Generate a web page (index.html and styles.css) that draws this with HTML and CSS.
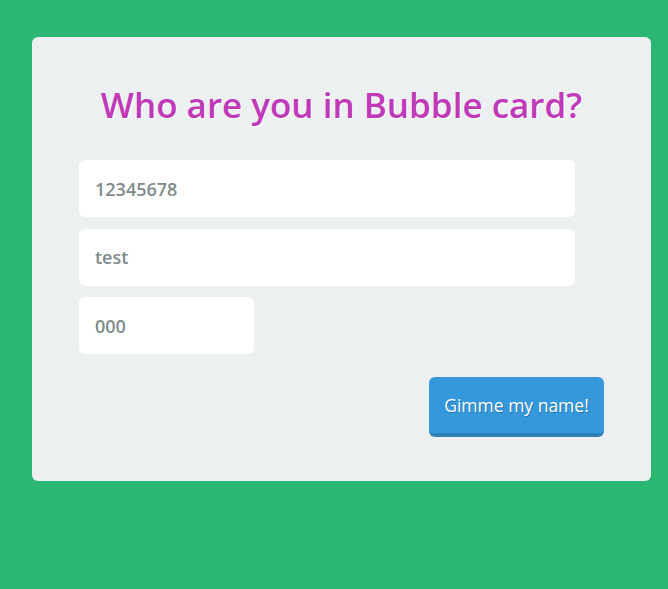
FILE: index.html
```html
<!DOCTYPE html>
<html>
<head>
<meta charset="utf-8">
<link rel="stylesheet" href="styles.css">
</head>
<body>
<div class="card">
  <h1 class="title">Who are you in Bubble card?</h1>
  <form class="form">
    <input class="field" type="text" placeholder="12345678">
    <input class="field" type="text" placeholder="test">
    <input class="field field-short" type="text" placeholder="000">
    <div class="actions">
      <button class="btn" type="button">Gimme my name!</button>
    </div>
  </form>
</div>
</body>
</html>
```

FILE: styles.css
```css
html, body {
  margin: 0;
  padding: 0;
}
body {
  background: #2bb673;
  font-family: "Open Sans", "Noto Sans", sans-serif;
  padding: 37px 17px 0 32px;
  height: 589px;
  box-sizing: border-box;
}
.card {
  width: 619px;
  height: 444px;
  box-sizing: border-box;
  background: #ecf0f1;
  border-radius: 6px;
  padding: 44px 47px 0 47px;
}
.title {
  margin: 0 0 31px 0;
  text-align: center;
  font-size: 35px;
  font-weight: 600;
  line-height: 48px;
  color: #c039b9;
  text-shadow: 1px 1px 0 #ffffff;
}
.form {
  display: flex;
  flex-direction: column;
  gap: 11.5px;
}
.field {
  display: block;
  width: 496px;
  height: 57px;
  box-sizing: border-box;
  border: none;
  border-radius: 6px;
  background: #ffffff;
  padding: 0 16px;
  font-family: "Open Sans", "Noto Sans", sans-serif;
  font-size: 18px;
  font-weight: 600;
  color: #7f8c8d;
  outline: none;
}
.field::placeholder {
  color: #7f8c8d;
  opacity: 1;
}
.field-short {
  width: 175px;
}
.actions {
  display: flex;
  justify-content: flex-end;
  margin-top: 11px;
}
.btn {
  width: 175px;
  height: 60px;
  box-sizing: border-box;
  border: none;
  border-bottom: 4px solid #2e7fb6;
  border-radius: 6px;
  background: #3498db;
  color: #ffffff;
  font-family: "Open Sans", "Noto Sans", sans-serif;
  font-size: 17.5px;
  font-weight: 400;
  text-shadow: 1px 1px 0 rgba(0,0,0,0.25);
  padding: 0;
  cursor: pointer;
}
```
